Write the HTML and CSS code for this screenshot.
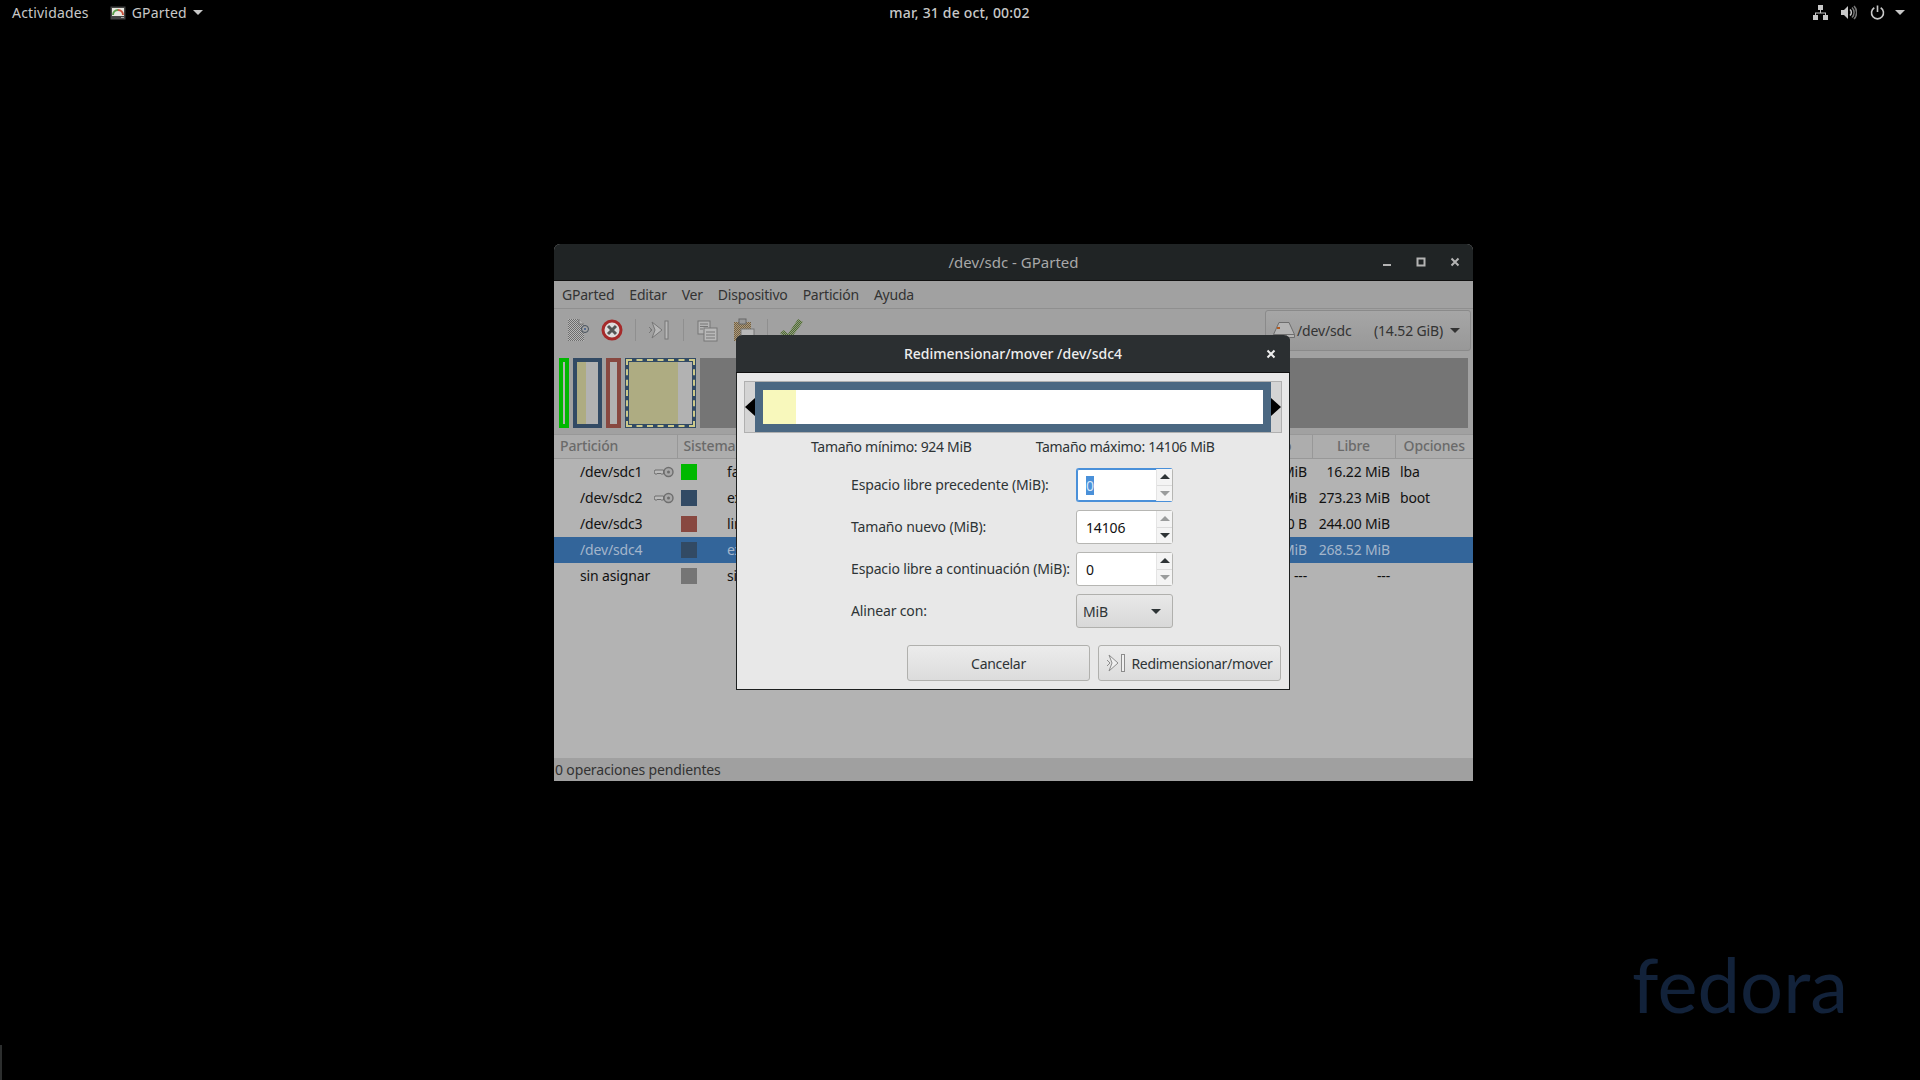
FILE: index.html
```html
<!DOCTYPE html>
<html>
<head>
  <meta charset="utf-8">
  <title>GParted</title>
  <link rel="stylesheet" href="styles.css">
</head>
<body>
  <svg class="defs" width="0" height="0">
    <defs>
      <pattern id="dither" width="2" height="2" patternUnits="userSpaceOnUse"><rect width="2" height="2" fill="#b8b8b8"/><rect width="1" height="1" fill="#6c6c6c"/><rect x="1" y="1" width="1" height="1" fill="#6c6c6c"/></pattern>
      <pattern id="dither-green" width="2" height="2" patternUnits="userSpaceOnUse"><rect width="2" height="2" fill="#8f9c7e"/><rect width="1" height="1" fill="#4f6a34"/><rect x="1" y="1" width="1" height="1" fill="#4f6a34"/></pattern>
      <pattern id="dither-brown" width="2" height="2" patternUnits="userSpaceOnUse"><rect width="2" height="2" fill="#b09a78"/><rect width="1" height="1" fill="#6e6048"/><rect x="1" y="1" width="1" height="1" fill="#6e6048"/></pattern>
    </defs>
  </svg>
  <div class="topbar">
    <div class="top-left">
      <span class="activities">Actividades</span>
      <span class="app-menu">
        <svg width="16" height="14" viewBox="0 0 16 14"><rect x="0.5" y="0.5" width="15" height="13" fill="#444"/><rect x="2" y="2" width="12" height="8" fill="#e8e8e0"/><path d="M3 9a5 5 0 0 1 5-5" fill="none" stroke="#5a9e4a" stroke-width="2"/><path d="M8 4a5 5 0 0 1 5 5" fill="none" stroke="#c8503c" stroke-width="2"/><rect x="11" y="11" width="3" height="1" fill="#aaa"/></svg>
        GParted
        <i class="arrow-down top-arrow"></i>
      </span>
    </div>
    <div class="clock">mar, 31 de oct, 00:02</div>
    <div class="top-right">
      <svg width="15" height="15" viewBox="0 0 15 15" fill="#c8c8c8"><rect x="5" y="0" width="5" height="5"/><rect x="0" y="10" width="5" height="5"/><rect x="10" y="10" width="5" height="5"/><path d="M7 5h1v2.500h5V10h-1V8.500H3V10H2V7.500h5z"/></svg>
      <svg width="16" height="15" viewBox="0 0 16 15"><path d="M0 5h3l4-4v13l-4-4H0z" fill="#c8c8c8"/><path d="M9 4.500a4 4 0 0 1 0 6" fill="none" stroke="#c8c8c8" stroke-width="1.500"/><path d="M11 2.500a7 7 0 0 1 0 10" fill="none" stroke="#777" stroke-width="1.500"/><path d="M13 1a9.500 9.500 0 0 1 0 13" fill="none" stroke="#777" stroke-width="1.500"/></svg>
      <svg width="15" height="15" viewBox="0 0 15 15" fill="none" stroke="#c8c8c8" stroke-width="1.600"><path d="M4.300 2.800a6 6 0 1 0 6.400 0"/><path d="M7.500 0.500v6.500"/></svg>
      <i class="arrow-down top-arrow top-arrow-right"></i>
    </div>
  </div>

  <div class="wallpaper-logo">fedora</div>
  <div class="edge-sliver"></div>

  <div class="window main-window">
    <div class="titlebar">
      <span class="title-text">/dev/sdc - GParted</span>
      <div class="win-controls">
        <svg width="10" height="10" viewBox="0 0 10 10"><rect x="1" y="7" width="8" height="2" fill="#b4b4b4"/></svg>
        <svg width="10" height="10" viewBox="0 0 10 10"><rect x="1.500" y="1.500" width="7" height="7" fill="none" stroke="#b4b4b4" stroke-width="2"/></svg>
        <svg width="10" height="10" viewBox="0 0 10 10"><path d="M1.500 1.500l7 7M8.500 1.500l-7 7" stroke="#b4b4b4" stroke-width="2"/></svg>
      </div>
    </div>
    <div class="menubar">
      <span>GParted</span><span>Editar</span><span>Ver</span><span>Dispositivo</span><span>Partición</span><span>Ayuda</span>
    </div>
    <div class="toolbar">
      <svg class="tool" width="24" height="24" viewBox="0 0 24 24"><path d="M2 1h11l5 5v17H2z" fill="url(#dither)"/><path d="M13 1v5h5" fill="#b4b4b4" stroke="#777"/><circle cx="19" cy="11" r="3.500" fill="#a4a4a4" stroke="#45505c"/><circle cx="19" cy="11" r="1" fill="#3a5a8c"/></svg>
      <svg class="tool" width="24" height="24" viewBox="0 0 24 24"><circle cx="12" cy="12" r="9" fill="#ddd" stroke="#a52a2a" stroke-width="3"/><path d="M8 8l8 8M16 8l-8 8" stroke="#555" stroke-width="3"/></svg>
      <i class="tool-sep"></i>
      <svg class="tool tool-skip" width="24" height="24" viewBox="0 0 24 24"><path d="M2 9l3 3-3 3M3 12h1" fill="none" stroke="#777"/><path d="M5 4l10 8-10 8 3-8z" fill="#b8b8b8" stroke="#777"/><rect x="18" y="3" width="3" height="18" fill="#b8b8b8" stroke="#777"/></svg>
      <i class="tool-sep"></i>
      <svg class="tool tool-copy" width="24" height="24" viewBox="0 0 24 24"><rect x="3" y="3" width="12" height="13" fill="#b4b4b4" stroke="#777"/><rect x="9" y="10" width="13" height="13" fill="#b8b8b8" stroke="#777"/><path d="M5 6h8M5 8.500h8M5 11h3M11 14h9M11 17h9M11 20h9" stroke="#777"/></svg>
      <svg class="tool tool-paste" width="24" height="24" viewBox="0 0 24 24"><rect x="2" y="4" width="17" height="19" fill="url(#dither-brown)"/><rect x="7" y="1" width="7" height="5" fill="#999" stroke="#666"/><rect x="9" y="11" width="13" height="12" fill="#b8b8b8" stroke="#777"/></svg>
      <i class="tool-sep"></i>
      <svg class="tool" width="24" height="24" viewBox="0 0 24 24"><path d="M1 15l4-3 4 4L19 1l5 3L10 23z" fill="url(#dither-green)"/></svg>
      <div class="device-combo">
        <svg width="22" height="16" viewBox="0 0 22 16"><path d="M6 0.500h10l5.500 12v3H0.500v-3z" fill="#b4b4b4" stroke="#6e6e6e"/><rect x="4" y="5" width="3" height="2" fill="#b25a20"/><path d="M0.500 12.500h21" stroke="#6e6e6e"/></svg>
        <span class="device-name">/dev/sdc</span>
        <span class="device-size">(14.52 GiB)</span>
        <i class="arrow-down dim-arrow"></i>
      </div>
    </div>
    <div class="disk-graph">
      <div class="part part-green"></div>
      <div class="part part-blue"><i class="used used-small"></i></div>
      <div class="part part-red"></div>
      <div class="part-selected"><div class="part-dash"><i class="used"></i></div></div>
      <div class="part-free"></div>
    </div>
    <table class="part-table">
      <colgroup><col class="c-name"><col class="c-fs"><col class="c-label"><col class="c-size"><col class="c-used"><col class="c-free"><col class="c-flags"></colgroup>
      <tr>
        <th class="th-left">Partición</th><th class="th-left">Sistema de archivos</th><th></th><th></th><th>Usado</th><th>Libre</th><th>Opciones</th>
      </tr>
      <tr>
        <td class="td-name"><div class="name-cell">/dev/sdc1<svg class="key" width="20" height="12" viewBox="0 0 20 12"><circle cx="14.500" cy="6" r="4.500" fill="#a8a8a8" stroke="#6e6e6e" stroke-width="1.400"/><circle cx="14.500" cy="6" r="1.500" fill="#6e6e6e"/><path d="M9.500 4H1L0 6l1 2h2l1-1 1 1 1-1 1 1h2.500z" fill="#bcbcbc" stroke="#6e6e6e"/></svg></div></td>
        <td><div class="fs-cell"><i class="swatch sw-green"></i>fat32</div></td><td></td><td></td><td class="num">MiB</td><td class="num">16.22 MiB</td><td class="flags">lba</td>
      </tr>
      <tr>
        <td class="td-name"><div class="name-cell">/dev/sdc2<svg class="key" width="20" height="12" viewBox="0 0 20 12"><circle cx="14.500" cy="6" r="4.500" fill="#a8a8a8" stroke="#6e6e6e" stroke-width="1.400"/><circle cx="14.500" cy="6" r="1.500" fill="#6e6e6e"/><path d="M9.500 4H1L0 6l1 2h2l1-1 1 1 1-1 1 1h2.500z" fill="#bcbcbc" stroke="#6e6e6e"/></svg></div></td>
        <td><div class="fs-cell"><i class="swatch sw-blue"></i>ext4</div></td><td></td><td></td><td class="num">MiB</td><td class="num">273.23 MiB</td><td class="flags">boot</td>
      </tr>
      <tr>
        <td class="td-name"><div class="name-cell">/dev/sdc3</div></td>
        <td><div class="fs-cell"><i class="swatch sw-red"></i>linux-swap</div></td><td></td><td></td><td class="num">0 B</td><td class="num">244.00 MiB</td><td class="flags"></td>
      </tr>
      <tr class="row-selected">
        <td class="td-name"><div class="name-cell">/dev/sdc4</div></td>
        <td><div class="fs-cell"><i class="swatch sw-blue"></i>ext4</div></td><td></td><td></td><td class="num">MiB</td><td class="num">268.52 MiB</td><td class="flags"></td>
      </tr>
      <tr>
        <td class="td-name"><div class="name-cell">sin asignar</div></td>
        <td><div class="fs-cell"><i class="swatch sw-grey"></i>sin asignar</div></td><td></td><td></td><td class="num">---</td><td class="num">---</td><td class="flags"></td>
      </tr>
    </table>
    <div class="list-filler"></div>
    <div class="statusbar">0 operaciones pendientes</div>
  </div>

  <div class="window dialog">
    <div class="titlebar dialog-title">
      <span class="title-text">Redimensionar/mover /dev/sdc4</span>
      <div class="win-controls">
        <svg width="10" height="10" viewBox="0 0 10 10"><path d="M1.500 1.500l7 7M8.500 1.500l-7 7" stroke="#eee" stroke-width="2"/></svg>
      </div>
    </div>
    <div class="dialog-body">
      <div class="resizer">
        <div class="handle"><i class="tri-left"></i></div>
        <div class="resizer-bar"><div class="resizer-inner"><i class="resizer-used"></i></div></div>
        <div class="handle"><i class="tri-right"></i></div>
      </div>
      <div class="size-info">
        <span>Tamaño mínimo: 924 MiB</span>
        <span>Tamaño máximo: 14106 MiB</span>
      </div>
      <div class="form">
        <label>Espacio libre precedente (MiB):</label>
        <div class="spin spin-focus">
          <div class="spin-value"><span class="selected-text">0</span></div>
          <div class="spin-btns"><span><i class="arrow-up"></i></span><span><i class="arrow-down faint"></i></span></div>
        </div>
        <label>Tamaño nuevo (MiB):</label>
        <div class="spin">
          <div class="spin-value">14106</div>
          <div class="spin-btns"><span><i class="arrow-up faint"></i></span><span><i class="arrow-down"></i></span></div>
        </div>
        <label>Espacio libre a continuación (MiB):</label>
        <div class="spin">
          <div class="spin-value">0</div>
          <div class="spin-btns"><span><i class="arrow-up"></i></span><span><i class="arrow-down faint"></i></span></div>
        </div>
        <label>Alinear con:</label>
        <div class="select">MiB<i class="arrow-down"></i></div>
      </div>
      <div class="actions">
        <div class="btn">Cancelar</div>
        <div class="btn">
          <svg width="20" height="24" viewBox="0 0 20 24"><path d="M1 9l3 3-3 3" fill="none" stroke="#8c8c8c"/><path d="M3 4l9 8-9 8 3-8z" fill="#f0f0f0" stroke="#8c8c8c"/><rect x="15.500" y="3.500" width="3" height="17" fill="#f0f0f0" stroke="#8c8c8c"/></svg>
          Redimensionar/mover
        </div>
      </div>
    </div>
  </div>
</body>
</html>
```

FILE: styles.css
```css
* {
  box-sizing: border-box;
}
body {
  margin: 0;
  width: 1920px;
  height: 1080px;
  overflow: hidden;
  position: relative;
  background: #000;
  font-family: "Noto Sans", "DejaVu Sans", sans-serif;
  font-size: 14px;
  letter-spacing: -0.15px;
  color: #2e3436;
}
.defs {
  position: absolute;
}

/* triangles */
.arrow-down, .arrow-up {
  display: inline-block;
  width: 0;
  height: 0;
  border-left: 5px solid transparent;
  border-right: 5px solid transparent;
}
.arrow-down {
  border-top: 5px solid #2e3436;
}
.arrow-up {
  border-bottom: 5px solid #2e3436;
}
.arrow-down.faint {
  border-top-color: #9a9c9c;
}
.arrow-up.faint {
  border-bottom-color: #9a9c9c;
}

/* top bar */
.topbar {
  display: grid;
  grid-template-columns: 1fr auto 1fr;
  align-items: center;
  height: 25px;
  padding: 0 15px 0 12px;
  color: #c8c8c8;
  letter-spacing: 0.18px;
}
.top-left {
  display: flex;
  align-items: center;
  gap: 21px;
}
.app-menu {
  display: flex;
  align-items: center;
  gap: 6px;
}
.top-right {
  display: flex;
  justify-content: flex-end;
  align-items: center;
  gap: 13px;
}
.clock {
  margin-left: 2px;
  font-weight: 500;
}
.top-arrow {
  border-top-color: #c8c8c8;
}
.top-arrow-right {
  margin-left: -3px;
}

/* wallpaper */
.wallpaper-logo {
  position: absolute;
  left: 1632px;
  top: 931px;
  font-family: "Lato", sans-serif;
  font-size: 76px;
  line-height: 106px;
  letter-spacing: 0;
  color: #12223a;
  filter: blur(0.6px);
}
.edge-sliver {
  position: absolute;
  left: 0;
  top: 1045px;
  width: 2px;
  height: 35px;
  background: #2c2e2e;
}

/* windows */
.window {
  position: absolute;
  display: flex;
  flex-direction: column;
  border-radius: 6px 6px 0 0;
}
.main-window {
  left: 554px;
  top: 244px;
  width: 919px;
  height: 537px;
  background: #b3b3b3;
}
.titlebar {
  flex: none;
  position: relative;
  display: flex;
  align-items: center;
  justify-content: center;
  height: 37px;
  background: #202425;
  border-bottom: 1px solid #111;
  border-radius: 6px 6px 0 0;
  color: #a8a8a8;
  font-size: 15px;
  letter-spacing: 0;
}
.win-controls {
  position: absolute;
  right: 13px;
  top: 13px;
  display: flex;
  gap: 24px;
}
.menubar {
  flex: none;
  display: flex;
  gap: 15px;
  align-items: center;
  height: 28px;
  padding: 0 8px;
  background: #a1a1a1;
  border-bottom: 1px solid #8f8f8f;
  color: #333;
  letter-spacing: -0.22px;
}
.toolbar {
  flex: none;
  display: flex;
  align-items: center;
  height: 49px;
  padding: 0 2px 7px 12px;
  background: #a1a1a1;
}
.tool {
  flex: none;
  margin-right: 10px;
}
.tool-skip {
  margin-right: 11px;
}
.tool-copy {
  margin-right: 13px;
}
.tool-sep {
  flex: none;
  width: 1px;
  height: 22px;
  margin: 0 11px 0 1px;
  background: #8f8f8f;
}
.device-combo {
  margin-left: auto;
  display: flex;
  align-items: center;
  width: 206px;
  height: 41px;
  padding: 0 10px 0 7px;
  border: 1px solid #8a8a8a;
  border-radius: 3px;
  background: linear-gradient(#a6a6a6, #989898);
  color: #333;
}
.device-name {
  margin-left: 2px;
}
.device-size {
  margin-left: auto;
  margin-right: 7px;
}
.dim-arrow {
  border-top-color: #333;
}

/* disk graph */
.disk-graph {
  flex: none;
  display: flex;
  gap: 4px;
  height: 76px;
  padding: 0 5px 6px 5px;
  background: #a1a1a1;
}
.part {
  display: flex;
  border: 4px solid;
  background: #b2b2b2;
}
.part-green {
  width: 10px;
  border-color: #00b800;
}
.part-blue {
  width: 29px;
  border-color: #324a64;
}
.part-red {
  width: 15px;
  border-color: #884840;
}
.used {
  display: block;
  width: 49px;
  height: 100%;
  background: #aeac82;
}
.used-small {
  width: 9px;
}
.part-selected {
  width: 71px;
  padding: 1px;
  background: #324a64;
}
.part-dash {
  height: 100%;
  border: 2px dashed #cdc98a;
  padding: 1px;
  background: #324a64;
}
.part-dash .used {
  width: 100%;
  background: linear-gradient(to right, #aeac82 49px, #b2b2b2 49px);
}
.part-free {
  flex: 1;
  background: #757575;
}

/* partition table */
.part-table {
  flex: none;
  width: 100%;
  border-collapse: collapse;
  table-layout: fixed;
  color: #111;
}
.c-name { width: 123px; }
.c-fs { width: 230px; }
.c-label { width: 225px; }
.c-size { width: 97px; }
.c-used { width: 83px; }
.c-free { width: 83px; }
.part-table th {
  height: 24px;
  padding: 0 0 2px 0;
  font-weight: 500;
  color: #6a6a6a;
  background: #adadad;
  border-right: 1px solid #989898;
  border-bottom: 1px solid #989898;
  border-top: 1px solid #989898;
  text-align: center;
}
.part-table th:last-child {
  border-right: none;
}
.part-table th.th-left {
  text-align: left;
  padding-left: 6px;
}
.part-table td {
  height: 26px;
  padding: 0;
  white-space: nowrap;
  overflow: hidden;
}
.part-table td.num {
  text-align: right;
  padding-right: 5px;
}
.part-table td.flags {
  padding-left: 5px;
}
.name-cell {
  display: flex;
  align-items: center;
  justify-content: space-between;
  padding: 0 3px 0 26px;
}
.fs-cell {
  display: flex;
  align-items: center;
  gap: 30px;
  padding-left: 4px;
}
.swatch {
  flex: none;
  width: 16px;
  height: 16px;
}
.sw-green { background: #00b800; }
.sw-blue { background: #324a64; }
.sw-red { background: #884840; }
.sw-grey { background: #757575; }
.row-selected td {
  background: #33659a;
  color: #a4b6cb;
}
.list-filler {
  flex: 1;
}
.statusbar {
  flex: none;
  height: 23px;
  line-height: 23px;
  padding-left: 1px;
  background: #a0a0a0;
  color: #333;
}

/* dialog */
.dialog {
  left: 736px;
  top: 335px;
  width: 554px;
  height: 355px;
  border: 1px solid #1c1f1f;
  border-top: none;
  background: #e8e8e8;
}
.dialog-title {
  height: 38px;
  margin: 0 -1px;
  background: #2b2f31;
  color: #eee;
  font-size: 14px;
  font-weight: 500;
}
.dialog .win-controls {
  right: 14px;
  top: 14px;
}
.dialog-body {
  flex: 1;
  display: flex;
  flex-direction: column;
  padding: 8px 7px 8px 7px;
}
.resizer {
  flex: none;
  display: flex;
  align-items: stretch;
  height: 52px;
  border: 1px solid #b0b0b0;
  background: #d4d4d4;
}
.handle {
  flex: none;
  display: flex;
  align-items: center;
  width: 10px;
}
.tri-left, .tri-right {
  display: block;
  width: 0;
  height: 0;
  border-top: 9px solid transparent;
  border-bottom: 9px solid transparent;
}
.tri-left {
  border-right: 10px solid #000;
}
.tri-right {
  border-left: 10px solid #000;
}
.resizer-bar {
  flex: 1;
  padding: 8px;
  background: #4b6882;
}
.resizer-inner {
  height: 100%;
  background: #fff;
}
.resizer-used {
  display: block;
  width: 33px;
  height: 100%;
  background: #f8f8bc;
}
.size-info {
  flex: none;
  display: flex;
  gap: 64px;
  height: 26px;
  margin-bottom: 9px;
  align-items: center;
  padding-left: 67px;
  letter-spacing: -0.3px;
}
.form {
  flex: none;
  display: grid;
  grid-template-columns: 225px 97px;
  grid-auto-rows: 34px;
  row-gap: 8px;
  align-items: center;
  padding-left: 107px;
}
.form label {
  padding-bottom: 2px;
}
.spin {
  display: flex;
  height: 34px;
  border: 1px solid #b6b6b3;
  border-radius: 3px;
  background: #fff;
  color: #111;
}
.spin-focus {
  border-color: #4a90d9;
  border-right-color: #b6b6b3;
  box-shadow: inset 0 0 0 1px #4a90d9;
}
.spin-value {
  flex: 1;
  display: flex;
  align-items: center;
  padding-left: 9px;
}
.selected-text {
  background: #4a90d9;
  color: #d8e8f8;
}
.spin-btns {
  flex: none;
  width: 16px;
  display: flex;
  flex-direction: column;
  border-left: 1px solid #e4e4e4;
  background: #f4f4f4;
}
.spin-btns span {
  flex: 1;
  display: flex;
  align-items: center;
  justify-content: center;
}
.spin-btns span + span {
  border-top: 1px solid #dcdcdc;
}
.select {
  display: flex;
  align-items: center;
  justify-content: space-between;
  height: 34px;
  padding: 0 11px 0 6px;
  border: 1px solid #b0b0ad;
  border-radius: 3px;
  background: linear-gradient(#e8e8e8, #d8d8d8);
}
.actions {
  margin-top: auto;
  padding-right: 1px;
  display: flex;
  justify-content: flex-end;
  gap: 8px;
}
.btn {
  display: flex;
  align-items: center;
  justify-content: center;
  gap: 5px;
  width: 183px;
  height: 36px;
  border: 1px solid #b0b0ad;
  border-radius: 3px;
  background: linear-gradient(#ececec, #dcdcdc);
  letter-spacing: -0.3px;
}
```
